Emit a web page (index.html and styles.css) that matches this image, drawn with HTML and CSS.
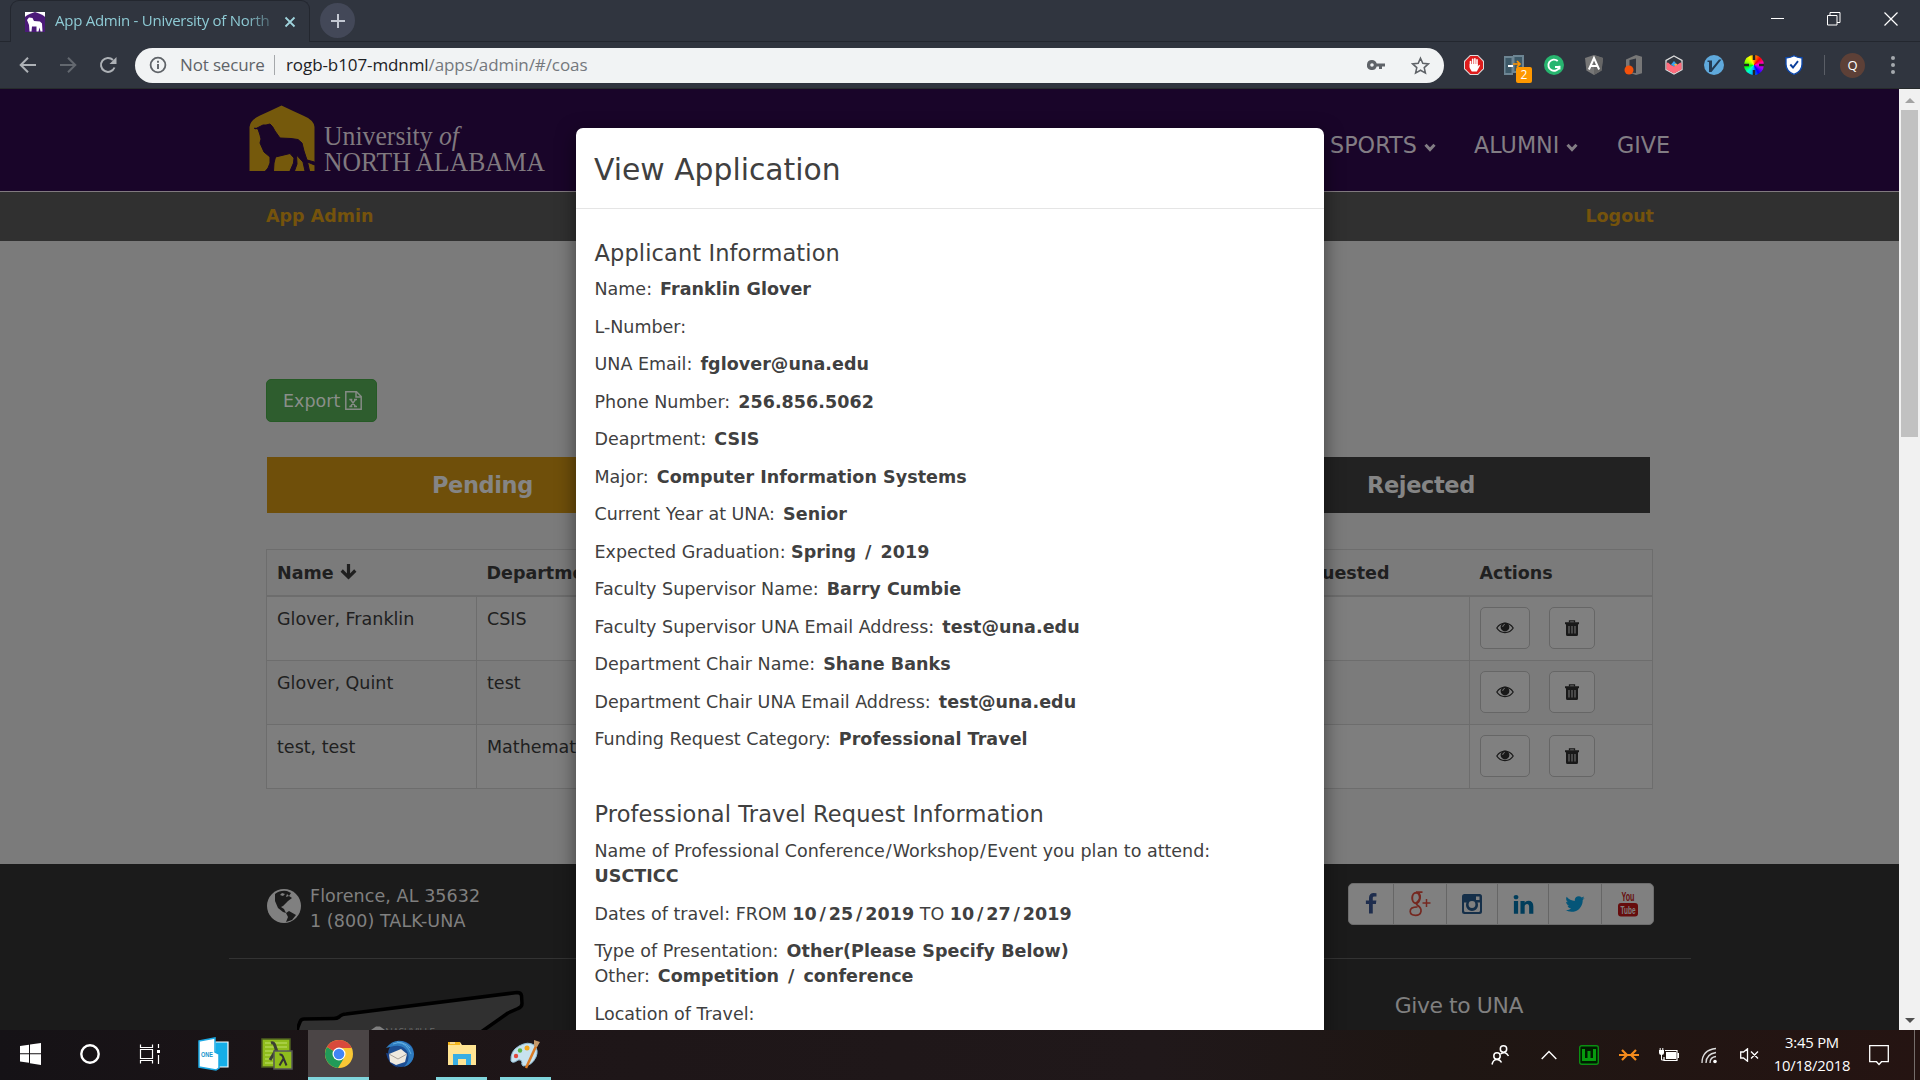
FILE: index.html
```html
<!DOCTYPE html>
<html lang="en">
<head>
<meta charset="utf-8">
<title>App Admin - University of North Alabama</title>
<link rel="stylesheet" href="styles.css">
</head>
<body>
<svg class="defs" aria-hidden="true">
  <symbol id="i-eye" viewBox="0 0 18 14"><path d="M.8 7C4.500 .9 13.500 .9 17.200 7 13.500 13.100 4.500 13.100 .8 7z" fill="none" stroke="currentColor" stroke-width="1.200"/><circle cx="9" cy="6" r="4.400" fill="currentColor"/><path d="M6.700 5.800Q6.900 3.800 8.700 3.500" fill="none" stroke="#808080" stroke-width="1"/></symbol>
  <symbol id="i-trash" viewBox="0 0 14 16"><path d="M4.500 2.500V.8h5v1.700" fill="none" stroke="currentColor" stroke-width="1.300"/><path d="M0 2.300h14v2H0zM1 4h12v10.500q0 1.500-1.500 1.500h-9Q1 16 1 14.500z" fill="currentColor"/><path d="M4 6v7.500M7 6v7.500M10 6v7.500" stroke="#707070" stroke-width="1.100"/></symbol>
  <symbol id="i-caret" viewBox="0 0 12 9"><path d="M1.500 1.800 6 6.500l4.500-4.700" fill="none" stroke="currentColor" stroke-width="3"/></symbol>
</svg>

<div class="tabstrip">
  <div class="tab">
    <svg class="favicon" width="20" height="20" viewBox="0 0 20 20"><path d="M0 0h20v20H0z" fill="#fff"/><path d="M0 20V5Q1 3 10 0q9 3 10 5v15z" fill="#4b1a78"/><path d="M2 8 4 5.500l3.500.5L9 9l6 .5 2 2 .5 8h-2l-1-4-1 4h-2v-5H7l-.5 5H4.500L4 13z" fill="#fff"/></svg>
    <span class="tab-title">App Admin - University of North</span>
    <svg width="12" height="12" viewBox="0 0 12 12"><path d="M1.500 1.500l9 9m0-9-9 9" stroke="#9fd3dc" stroke-width="1.800"/></svg>
  </div>
  <div class="newtab"><svg width="16" height="16" viewBox="0 0 16 16"><path d="M8 1v14M1 8h14" stroke="#c3c8d2" stroke-width="2"/></svg></div>
  <div class="wincontrols">
    <svg width="14" height="14" viewBox="0 0 14 14"><path d="M1 6.500h13" stroke="#fff"/></svg>
    <svg width="14" height="14" viewBox="0 0 14 14"><path d="M.5 3.500h9.500v9.500H.5zM3 3.500v-3h10v10h-3" fill="none" stroke="#fff"/></svg>
    <svg width="14" height="14" viewBox="0 0 14 14"><path d="M.5.5l13 13m0-13-13 13" stroke="#fff" stroke-width="1.200"/></svg>
  </div>
</div>

<div class="toolbar">
  <div class="nav-icons">
    <svg width="18" height="18" viewBox="0 0 18 18"><path d="M17 9H2m7-7.300L1.700 9 9 16.300" fill="none" stroke="#adb1b6" stroke-width="2"/></svg>
    <svg width="18" height="18" viewBox="0 0 18 18"><path d="M1 9h15M9 1.700 16.300 9 9 16.300" fill="none" stroke="#63686f" stroke-width="2"/></svg>
    <svg width="18" height="18" viewBox="0 0 18 18"><path d="M15.500 11.500A7 7 0 1 1 14 4" fill="none" stroke="#adb1b6" stroke-width="2"/><path d="M17.500 1v7h-7z" fill="#adb1b6"/></svg>
  </div>
  <div class="omnibox">
    <svg width="18" height="18" viewBox="0 0 18 18"><circle cx="9" cy="9" r="7.400" fill="none" stroke="#5f6368" stroke-width="1.800"/><path d="M9 8v5M9 4.800v1.900" stroke="#5f6368" stroke-width="1.900"/></svg>
    <span class="secure">Not secure</span>
    <span class="sep"></span>
    <span class="url"><b>rogb-b107-mdnml</b>/apps/admin/#/coas</span>
    <svg class="key" width="18" height="12" viewBox="0 0 18 12"><path d="M5 1a5 5 0 1 0 4.700 6.500H12V10h3V7.500h3v-3H9.700A5 5 0 0 0 5 1zm0 3.200a1.800 1.800 0 1 1 0 3.600 1.800 1.800 0 0 1 0-3.600z" fill="#5f6368"/></svg>
    <svg width="19" height="19" viewBox="0 0 20 20"><path d="m10 2.300 2.400 5.400 5.900.6-4.400 3.900 1.300 5.800-5.200-3-5.200 3 1.300-5.800-4.400-3.900 5.900-.6z" fill="none" stroke="#5f6368" stroke-width="1.600"/></svg>
  </div>
  <div class="extensions">
    <svg width="20" height="20" viewBox="0 0 20 20"><path d="M6 0h8l6 6v8l-6 6H6l-6-6V6z" fill="#ddd"/><path d="M6.400 1h7.200L19 6.400v7.200L13.600 19H6.400L1 13.600V6.400z" fill="#dd1c1c"/><path d="M6.500 12V6.500M8.700 10V4.200M10.900 10V3.700M13 10V4.900" stroke="#fff" stroke-width="1.600" stroke-linecap="round"/><path d="M5.700 9h8.100v2.500l1.300-1.800q1.200 0 .7 1.200L12.800 16.500H7.800L5.700 13z" fill="#fff"/></svg>
    <span class="badged"><svg width="20" height="20" viewBox="0 0 20 20"><path d="M0 1h9v19H0zM9 0h11v18H9z" fill="#6d8593"/><path d="M1.500 3h6v15h-6zM10.500 2H18v14h-7.500z" fill="#3d5968"/><path d="M4 11h5" stroke="#fff" stroke-width="2"/><path d="M9 9h6m-2-3 3 3-3 3" stroke="#ff9500" stroke-width="1.700" fill="none"/></svg><span class="count">2</span></span>
    <svg width="20" height="20" viewBox="0 0 20 20"><circle cx="10" cy="10" r="10" fill="#27b56f"/><path d="M13.700 6A5.600 5.600 0 1 0 15.300 12H11m4.500-1.200v3.700" fill="none" stroke="#fff" stroke-width="1.900"/></svg>
    <svg width="20" height="20" viewBox="0 0 20 20"><path d="M10 0l9 3-1.400 12.500L10 20l-7.600-4.500L1 3z" fill="#777"/><path d="M10 0l9 3-1.400 12.500L10 20z" fill="#666"/><path d="M4.900 14.500 10 3l5.100 11.500M7 11h6" fill="none" stroke="#fff" stroke-width="2"/></svg>
    <svg width="20" height="20" viewBox="0 0 20 20"><path d="M2 4.500 12 0l6 1.700v16.500L12 20l-8-2.700 8 .8V3.500L5.500 5v8L2 14.500z" fill="#777"/><circle cx="5" cy="15" r="4.500" fill="#f4510b"/></svg>
    <svg width="20" height="20" viewBox="0 0 20 20"><path d="m10 1 8 4.500v9L10 19l-8-4.500v-9z" fill="#31363f" stroke="#ddd" stroke-width="1.300"/><path d="m7 9.500 3-3.500 3.500 4L10 12z" fill="#36a2eb"/><path d="M2.500 8 4 7.500 7 10l3 1.500 3.500-2 3-2 1 .5v6.500L10 18.500l-7.500-4z" fill="#ff6b7c"/><path d="m10 9.500 2-1 1.500 1-2 1.500z" fill="#ffb13d"/></svg>
    <svg width="20" height="20" viewBox="0 0 20 20"><circle cx="10" cy="10" r="10" fill="#5fa9dc"/><path d="M3.500 5.500H8v7.500l7-8.500h2.500L7.500 17H5V7H3.500z" fill="#243b53"/></svg>
    <span class="wheel"><svg width="20" height="20" viewBox="0 0 20 20"><path d="M10 0v5M10 15v5M0 10h5M15 10h5" stroke="#222" stroke-width="2.500"/></svg></span>
    <svg width="20" height="20" viewBox="0 0 20 20"><path d="M10 .7q4 2.300 8 2v6.500q0 7-8 10.200Q2 16.200 2 9.200V2.700q4 .3 8-2z" fill="#fff" stroke="#0b48ae" stroke-width="1.300"/><path d="m6.300 9.500 2.700 3 5-6.300" fill="none" stroke="#0b3f9c" stroke-width="1.900"/></svg>
  </div>
  <span class="tb-sep"></span>
  <span class="avatar">Q</span>
  <svg class="dots" width="6" height="20" viewBox="0 0 6 20"><g fill="#a5a9ae"><circle cx="3" cy="3" r="2"/><circle cx="3" cy="10" r="2"/><circle cx="3" cy="17" r="2"/></g></svg>
</div>

<div class="view">
  <div class="page">
    <header class="site-header">
      <svg class="logo" width="300" height="70" viewBox="0 0 300 70">
        <path d="M1.500 66V22Q2 15 12 10.500 22 6 33.500 .5 45 6 55 10.500 66 15 66.500 22V66z" fill="#75590c"/>
        <path d="M6.500 23 10 24 12 30 13 34 12 38 16 47 22 52 22 58 20 63 17.500 66H25.500L26 58 27.500 52 42 48.500 46 53 45.500 58 42 66H46.500L49 59 48.500 50 55 57 57 66H61.500L59.500 57 66.500 60V57L59 55 56 46 54 38 50 34.500 43 33.500 32 33 27 26 24.500 21.500 22 19 18 20 15 20 11 22 7 24z" fill="#190529" stroke="#190529"/>
        <text x="76" y="40" font-family="Liberation Serif, serif" font-size="28" textLength="135" lengthAdjust="spacingAndGlyphs" fill="#80797f">University <tspan font-style="italic">of</tspan></text>
        <text x="76" y="65.500" font-family="Liberation Serif, serif" font-size="28" textLength="221" lengthAdjust="spacingAndGlyphs" fill="#80797f">NORTH ALABAMA</text>
      </svg>
      <nav class="menu">
        <span class="m1">SPORTS <svg width="12" height="9"><use href="#i-caret"/></svg></span>
        <span class="m2">ALUMNI <svg width="12" height="9"><use href="#i-caret"/></svg></span>
        <span class="m3">GIVE</span>
      </nav>
    </header>
    <div class="subnav"><span>App Admin</span><span>Logout</span></div>
    <main class="content">
      <button class="export"><span>Export</span> <svg width="17" height="19" viewBox="0 0 17 19"><path d="M.8.8h10.700l4.700 4.700v12.700H.8zM11 1v5h5" fill="none" stroke="#858b85" stroke-width="1.500"/><path d="m5.500 8.500 5 7m0-7-5 7M4.300 8.500h3M9 8.500h3M4.300 15.500h3M9 15.500h3" fill="none" stroke="#858b85" stroke-width="1.300"/></svg></button>
      <div class="status-tabs"><div class="pending">Pending</div><div class="approved"></div><div class="rejected">Rejected</div></div>
      <table class="apps">
        <colgroup><col class="c1"><col class="c2"><col class="c3"><col class="c4"></colgroup>
        <thead><tr><th>Name <svg width="17" height="16" viewBox="0 0 17 16"><path d="M8.500 0v13M1.700 6.500l6.800 6.800 6.800-6.800" fill="none" stroke="#1f1f1f" stroke-width="3.200"/></svg></th><th>Department</th><th class="right">Requested</th><th>Actions</th></tr></thead>
        <tbody>
          <tr><td>Glover, Franklin</td><td>CSIS</td><td></td><td><div class="acts"><button class="act eye"><svg width="18" height="14"><use href="#i-eye"/></svg></button><button class="act"><svg width="14" height="16"><use href="#i-trash"/></svg></button></div></td></tr>
          <tr><td>Glover, Quint</td><td>test</td><td></td><td><div class="acts"><button class="act eye"><svg width="18" height="14"><use href="#i-eye"/></svg></button><button class="act"><svg width="14" height="16"><use href="#i-trash"/></svg></button></div></td></tr>
          <tr><td>test, test</td><td>Mathemat</td><td></td><td><div class="acts"><button class="act eye"><svg width="18" height="14"><use href="#i-eye"/></svg></button><button class="act"><svg width="14" height="16"><use href="#i-trash"/></svg></button></div></td></tr>
        </tbody>
      </table>
    </main>
    <footer class="footer">
      <div class="foot-top">
        <svg class="globe" width="34" height="34" viewBox="0 0 34 34"><circle cx="17" cy="17" r="17" fill="#808080"/><path d="M8 5q5-4 12-3l4 2-2 3 3 2-4 3-5 5-2 1 3 2 2 4-3-1-5-4-3-7zM22 22l7 4-4 5-6 2 2-5-2-4z" fill="#1b1b1b"/><path d="m13 6 3 1 2-2-3-1zM19 8l3-1-2-2z" fill="#808080"/></svg>
        <div class="addr">Florence, AL 35632<br>1 (800) TALK-UNA</div>
        <div class="social">
          <span class="s1"><svg width="22" height="22" viewBox="0 0 1792 1792"><path fill="#1e2d4d" d="M1343 12v264h-157q-86 0-116 36t-30 108v189h293l-39 296h-254v759h-306v-759h-255v-296h255v-218q0-186 104-288.500t277-102.500q147 0 228 12z"/></svg></span>
          <span class="s2"><svg width="22" height="26" viewBox="0 0 22 26"><g fill="none" stroke="#752820"><ellipse cx="7" cy="7" rx="3.800" ry="5.300" stroke-width="2"/><path d="M7 1.200h6.500M9.500 1.500q2.500 3 1.300 6-.8 2-3 3.800-1.300 1.200.7 3 4 2.700 3.500 6-.7 4-5.500 4-5 0-5.300-3.800Q1 16 8.500 15.800" stroke-width="1.700"/><path d="M17.500 8v8M13.500 12h8" stroke-width="1.500"/></g></svg></span>
          <span class="s3"><svg width="20" height="20" viewBox="0 0 20 20"><rect width="20" height="20" rx="2.500" fill="#152f49"/><path d="M2 8.500h2.500a6 6 0 1 0 11 0H18v8q0 1.500-1.500 1.500h-13Q2 18 2 16.500zM14 2.500h3.500v3.500H14z" fill="#808080"/><circle cx="10" cy="10.500" r="5" fill="#152f49"/><circle cx="10" cy="10.500" r="3.400" fill="#808080"/></svg></span>
          <span class="s4"><svg width="23" height="23" viewBox="0 0 1792 1792"><path fill="#003d5b" d="M477 625v991h-330v-991h330zm21-306q1 73-50.500 122t-135.500 49h-2q-82 0-132-49t-50-122q0-74 51.500-122.500t134.500-48.500 133 48.500 51 122.500zm1166 729v568h-329v-530q0-105-40.500-164.500t-126.500-59.500q-63 0-105.500 34.500t-63.500 85.500q-11 30-11 81v553h-329q2-399 2-647t-1-296l-1-48h329v144h-2q20-32 41-56t56.500-52 87-43.500 114.500-15.500q171 0 275 113.500t104 332.500z"/></svg></span>
          <span class="s5"><svg width="22" height="22" viewBox="0 0 1792 1792"><path fill="#055578" d="M1684 408q-67 98-162 167 1 14 1 42 0 130-38 259.500t-115.500 248.500-184.500 210.500-258 146-323 54.500q-271 0-496-145 35 4 78 4 225 0 401-138-105-2-188-64.500t-114-159.500q33 5 61 5 43 0 85-11-112-23-185.500-111.500t-73.500-205.500v-4q68 38 146 41-66-44-105-115t-39-154q0-88 44-163 121 149 294.500 238.500t371.500 99.500q-8-38-8-74 0-134 94.500-228.500t228.500-94.500q140 0 236 102 109-21 205-78-37 115-142 178 93-10 186-50z"/></svg></span>
          <span class="s6"><svg width="20" height="28" viewBox="0 0 20 28"><text x="3.500" y="11" font-family="Liberation Sans, sans-serif" font-size="12" font-weight="700" textLength="13" lengthAdjust="spacingAndGlyphs" fill="#660c0c">You</text><rect y="13" width="20" height="13.500" rx="3" fill="#660c0c"/><text x="2.500" y="24" font-family="Liberation Sans, sans-serif" font-size="11" font-weight="700" textLength="15" lengthAdjust="spacingAndGlyphs" fill="#808080">Tube</text></svg></span>
        </div>
      </div>
      <div class="foot-bottom">
        <svg class="map" width="240" height="50" viewBox="0 0 240 50"><path d="M-2 60 1 47 3 42q1-3 4-3l30-.5q3 0 5-1.500 3-3 7-3L220 12.500q4 0 4.500 3l.5 8q0 3.500-4 5l-10 4.500-27 19z" fill="#303030" stroke="#000" stroke-width="3.500" stroke-linejoin="round"/><path d="m74 50 5-3.500h4l5 3.500z" fill="#808080"/><text x="88" y="56" font-family="Open Sans, sans-serif" font-size="10.500" textLength="50" fill="#666">NASHVILLE</text></svg>
        <span class="give">Give to UNA</span>
      </div>
    </footer>
  </div>
  <div class="scrollbar"><span class="up"></span><span class="thumb"></span><span class="down"></span></div>

  <section class="modal">
    <h3>View Application</h3>
    <div class="modal-body">
      <h4>Applicant Information</h4>
      <p>Name: <b>Franklin Glover</b></p>
      <p>L-Number:</p>
      <p>UNA Email: <b>fglover@una.edu</b></p>
      <p>Phone Number: <b>256.856.5062</b></p>
      <p>Deaprtment: <b>CSIS</b></p>
      <p>Major: <b>Computer Information Systems</b></p>
      <p>Current Year at UNA: <b>Senior</b></p>
      <p>Expected Graduation: <b class="tight">Spring <i>/</i> 2019</b></p>
      <p>Faculty Supervisor Name: <b>Barry Cumbie</b></p>
      <p>Faculty Supervisor UNA Email Address: <b>test@una.edu</b></p>
      <p>Department Chair Name: <b>Shane Banks</b></p>
      <p>Department Chair UNA Email Address: <b>test@una.edu</b></p>
      <p>Funding Request Category: <b>Professional Travel</b></p>
      <h4 class="second">Professional Travel Request Information</h4>
      <p>Name of Professional Conference<i>/</i>Workshop<i>/</i>Event you plan to attend:<br><b class="tight">USCTICC</b></p>
      <p>Dates of travel: FROM <b class="tight">10<i>/</i>25<i>/</i>2019</b> TO <b class="tight">10<i>/</i>27<i>/</i>2019</b></p>
      <p>Type of Presentation: <b>Other(Please Specify Below)</b><br>Other: <b>Competition <i>/</i> conference</b></p>
      <p>Location of Travel:</p>
    </div>
  </section>
</div>

<div class="taskbar">
  <div class="apps-row">
    <span><svg width="21" height="24" viewBox="0 0 21 24"><path d="M0 4l9-1.300v8.500H0zM10 2.500 21 1v10.200H10zM0 12.200h9v8.500L0 19.500zM10 12.200h11V23l-11-1.800z" fill="#fff"/></svg></span>
    <span><svg width="22" height="22" viewBox="0 0 22 22"><circle cx="11" cy="11" r="8.700" fill="none" stroke="#fff" stroke-width="2.400"/></svg></span>
    <span><svg width="22" height="20" viewBox="0 0 22 20"><path d="M1.500 5.500h12v9h-12zM1.500.5v3h12v-3M1.500 19.500v-3h12v3M19.500 0v4M19.500 11v9" fill="none" stroke="#fff" stroke-width="1.200"/><path d="M18 6h3v3h-3z" fill="#fff"/></svg></span>
    <span class="w68"><svg width="32" height="34" viewBox="0 0 32 34"><path d="M17 5h13v25H17z" fill="#16aee8" stroke="#fff" stroke-width="1.200"/><path d="M1 4 17 1v14l4 2v14l-3 2-17-3z" fill="#fff" stroke="#1ba9e4" stroke-width="1.500"/><text x="3" y="20" font-family="Liberation Sans, sans-serif" font-size="7.500" font-weight="700" textLength="12" lengthAdjust="spacingAndGlyphs" fill="#1594cc">ONE</text></svg></span>
    <span class="lam"><svg width="32" height="34" viewBox="0 0 32 34"><path d="M1 2h28v28H1z" fill="#8fbc1c" stroke="#4f6021" stroke-width="1.500"/><path d="M4 6h22M4 10h22M4 14h22M4 18h8M4 22h8M4 26h8" stroke="#bfe06a"/><path d="M10 6q3-1 4 3l5 14M15 13 9 23" fill="none" stroke="#3b4033" stroke-width="3"/><path d="M13 14h18v18H13z" fill="#8fbc1c" stroke="#555" stroke-width="1.500"/><path d="M18.500 17.500q2.500-.5 3.500 2.500l3.500 8.500M22.500 21.500l-4 7" fill="none" stroke="#333" stroke-width="2"/></svg></span>
    <span class="active"><svg width="28" height="28" viewBox="0 0 28 28"><circle cx="14" cy="14" r="14" fill="#f9c735"/><path d="M14 14 1.900 7A14 14 0 0 0 13 28l6-10z" fill="#219a58"/><path d="M14 14 1.900 7a14 14 0 0 1 24.700 1H14z" fill="#d94a3c"/><circle cx="14" cy="14" r="6.500" fill="#fff"/><circle cx="14" cy="14" r="5.300" fill="#4285f4"/></svg></span>
    <span class="w61"><svg width="30" height="30" viewBox="0 0 30 30"><circle cx="16" cy="15" r="13" fill="#1d4f94"/><path d="M1 9Q8 0 17 2q11 3 12 13-1 10-10 13 6-6 4-14-4-9-14-7z" fill="#2f7cc0"/><path d="M8 5q10-4 17 4M12 3q10 1 14 12" fill="none" stroke="#62aee0"/><path d="M1 14q2 12 13 15-7-4-8-14z" fill="#173f87"/><path d="m4 15 12-5 6 5-2 8-9 3-6-3z" fill="#eee9df"/><path d="m4 15 9 5 9-5" fill="none" stroke="#a9a29a"/></svg></span>
    <span class="open w64"><svg width="28" height="26" viewBox="0 0 28 26"><path d="M0 1h12l2 3h14v20H0z" fill="#ffe493"/><path d="M0 1h12v3H0z" fill="#f3b61f"/><path d="M2 1.500h5v1H2z" fill="#fff"/><path d="M5 24V13h18v11h-5v-6h-8v6z" fill="#38aee4"/></svg></span>
    <span class="open w61"><svg width="30" height="30" viewBox="0 0 30 30"><path d="M1 22Q0 12 9 7q9-5 15-1 5 5 2 12-4 9-13 9-2-2-1-4-1-3-4-2-5 4-7 1z" fill="#c7e2ef" stroke="#8fbdd3"/><circle cx="6" cy="17" r="2.200" fill="#e2493e"/><circle cx="10" cy="11.500" r="2.200" fill="#5bb548"/><circle cx="17" cy="9" r="2.500" fill="#f2a71b"/><path d="M16 29 27 5" stroke="#d97b25" stroke-width="2.500"/><path d="m24 7 0-6 6 2-3 5z" fill="#c59a6b"/></svg></span>
  </div>
  <div class="tray">
    <span class="people"><svg width="19" height="20" viewBox="0 0 19 20"><g fill="none" stroke="#fff" stroke-width="1.500"><circle cx="12.500" cy="4" r="3.200"/><circle cx="6" cy="11" r="3.200"/><path d="M1 19.500q1-5 5-5 3 0 4.500 3M9.500 9q5-3.500 8 2"/></g></svg></span>
    <span><svg width="16" height="10" viewBox="0 0 16 10"><path d="m.7 9 7.300-7.500L15.300 9" fill="none" stroke="#fff" stroke-width="1.400"/></svg></span>
    <span><svg width="20" height="20" viewBox="0 0 20 20"><rect x=".7" y=".7" width="18.600" height="18.600" rx="2" fill="#001d00" stroke="#0b8f12" stroke-width="1.400"/><path d="M4.500 4v10.500h11V4M10 6v8" fill="none" stroke="#079b0e" stroke-width="3"/></svg></span>
    <span><svg width="20" height="14" viewBox="0 0 20 14"><path d="M0 7h20M3 2l5 5-5 5M17 2l-5 5 5 5" fill="none" stroke="#f58b1c" stroke-width="2.200"/></svg></span>
    <span><svg width="20" height="14" viewBox="0 0 20 14"><path d="M6 2.500h12v10H5V9" fill="none" stroke="#fff" stroke-width="1.200"/><path d="M7 4h10v7H7zM18.500 5H20v5h-1.500zM0 2h5v3q0 2-2.500 2T0 5z" fill="#fff"/><path d="M1.200 0v2M3.800 0v2M2.500 6v6h3" stroke="#fff" fill="none"/></svg></span>
    <span><svg width="17" height="17" viewBox="0 0 17 17"><g fill="none" stroke="#ddd" stroke-width="1.300"><path d="M1 16Q1 3 15 1.500M5 16Q5 7 15 5.500M9 16q0-6 6-6.500"/></g><circle cx="14" cy="14.500" r="1.800" fill="#fff"/></svg></span>
    <span><svg width="19" height="14" viewBox="0 0 19 14"><path d="M.7 4h2.800L7.500.8v12.400L3.500 10H.7zM11 3.500l7 7m0-7-7 7" fill="none" stroke="#fff" stroke-width="1.300"/></svg></span>
    <div class="clock">3:45 PM<br>10/18/2018</div>
    <svg width="20" height="21" viewBox="0 0 20 21"><path d="M.7.7h18.600v16H12.500L10 19.500 7.500 16.700H.7z" fill="none" stroke="#fff" stroke-width="1.300"/></svg>
    <div class="desk"></div>
  </div>
</div>
</body>
</html>
```
FILE: styles.css
```css
* { box-sizing: border-box; }
body { margin: 0; width: 1920px; height: 1080px; overflow: hidden; display: flex; flex-direction: column; font: 17.5px/25px "DejaVu Sans", Verdana, sans-serif; background: #30353f; }
svg { display: block; flex: none; }
.defs { position: absolute; width: 0; height: 0; }
button { font: inherit; }

/* browser tabs */
.tabstrip { height: 42px; flex: none; display: flex; align-items: center; background: #30353f; border-bottom: 1px solid #23272f; padding-left: 10px; font-family: "Open Sans", sans-serif; }
.tab { width: 300px; height: 42px; margin-bottom: -1px; background: #30353f; border: 1px solid #23272f; border-bottom: 0; border-radius: 9px 9px 0 0; display: flex; align-items: center; padding: 0 13px 0 14px; }
.tab-title { width: 217px; margin: 0 13px 0 10px; padding-bottom: 2px; white-space: nowrap; overflow: hidden; font-size: 15px; letter-spacing: -.26px; color: #8ecbd5; -webkit-mask-image: linear-gradient(90deg, #000 88%, rgba(0,0,0,.3)); mask-image: linear-gradient(90deg, #000 88%, rgba(0,0,0,.3)); }
.newtab { width: 35px; height: 35px; margin-left: 10px; border-radius: 50%; background: #434858; display: flex; align-items: center; justify-content: center; }
.wincontrols { margin-left: auto; margin-right: 22px; margin-bottom: 4px; display: flex; gap: 43px; }

/* browser toolbar */
.toolbar { height: 47px; flex: none; display: flex; align-items: center; background: #30353f; font-family: "Open Sans", sans-serif; border-bottom: 1px solid #262b2c; }
.nav-icons { display: flex; gap: 22px; margin-left: 19px; }
.omnibox { width: 1309px; height: 35px; margin-left: 18px; border-radius: 18px; background: #f1f3f4; display: flex; align-items: center; padding: 0 14px; font-size: 17px; }
.secure { width: 83px; margin-left: 13px; padding-bottom: 2px; color: #5f6368; white-space: nowrap; letter-spacing: -.15px; }
.sep { width: 1px; height: 20px; margin: 0 11px; background: #a5a8ab; }
.url { color: #74787d; letter-spacing: -.09px; padding-bottom: 2px; }
.url b { font-weight: 400; color: #202124; }
.key { margin-left: auto; margin-right: 26px; }
.extensions { display: flex; gap: 20px; margin-left: 20px; }
.badged { position: relative; }
.count { position: absolute; left: 12px; top: 12px; width: 16px; height: 16px; border-radius: 2px; background: #ff9800; color: #fff; font-size: 12px; line-height: 16px; text-align: center; }
.wheel { width: 20px; height: 20px; border-radius: 50%; background: conic-gradient(#9f0, #ff0, #f80, #f00, #f0c, #90f, #00f, #0af, #0fc, #0f0, #9f0); transform: rotate(-65deg); }
.wheel svg { transform: rotate(65deg); }
.tb-sep { width: 1px; height: 20px; margin: 0 15px 0 20px; background: #5a5e66; }
.avatar { width: 25px; height: 25px; border-radius: 50%; background: #5d4037; color: #fff; font-size: 13px; line-height: 24px; text-align: center; }
.dots { margin-left: 25px; }

/* page */
.view { position: relative; height: 941px; flex: none; display: flex; overflow: hidden; }
.page { width: 1899px; height: 941px; background: #7b7b7b; }
.site-header { height: 103px; background: #190529; border-bottom: 1px solid #80797f; display: flex; padding: 16px 0 0 248px; }
.menu { margin-left: 782px; padding-top: 28px; display: flex; color: #827d84; font-size: 22.300px; }
.menu span { display: flex; align-items: center; gap: 7px; height: 25px; white-space: nowrap; }
.menu svg { margin-top: 4px; }
.m1 { width: 144px; } .m2 { width: 143px; }
.subnav { height: 49px; background: #303030; display: flex; justify-content: space-between; padding: 12px 245px 0 266px; color: #75530c; font-weight: 700; }
.content { height: 623px; padding: 138px 0 0 266px; }
.export { display: flex; align-items: center; gap: 5px; width: 111px; height: 43px; padding: 0 0 0 16px; border: 1px solid #265a26; border-radius: 5px; background: #2e5d2e; color: #8a8f8a; }
.export span { padding-top: 2px; }
.status-tabs { display: flex; height: 56px; width: 1383px; margin: 35px 0 36px 1px; font-size: 22.500px; font-weight: 700; color: #858585; text-align: center; line-height: 56px; letter-spacing: -.4px; }
.pending { width: 431px; background: #6f4f0a; }
.approved { width: 491px; background: #222; }
.rejected { width: 461px; padding-left: 3px; background: #222; }
.apps { width: 1387px; border-collapse: collapse; table-layout: fixed; color: #202020; border: 1px solid #6d6d6d; }
.c1 { width: 210px; } .c2 { width: 300px; } .c4 { width: 183px; }
.apps th { text-align: left; height: 46px; padding: 2px 10px 0; border-bottom: 2px solid #6d6d6d; white-space: nowrap; }
.apps th svg { display: inline-block; vertical-align: -1px; }
.apps th.right { text-align: right; padding-right: 80px; }
.apps td { height: 64px; padding: 10px; vertical-align: top; border: 1px solid #6d6d6d; }
.apps tbody tr:first-child td { height: 65px; }
.apps tbody tr:nth-child(odd) { background: #7e7e7e; }
.acts { display: flex; gap: 19px; }
.act { width: 46px; height: 42px; padding: 0; border: 1px solid #666; border-radius: 5px; background: #808080; color: #191919; display: flex; align-items: center; justify-content: center; }
.act.eye { width: 50px; }

.footer { height: 166px; background: #1b1b1b; color: #808080; }
.foot-top { height: 95px; margin: 0 208px 0 229px; border-bottom: 1px solid #333; display: flex; padding: 19px 37px 0 38px; }
.globe { margin-top: 6px; }
.addr { margin: 1px 0 0 9px; height: 50px; white-space: nowrap; letter-spacing: .08px; }
.social { margin-left: auto; display: flex; width: 306px; height: 42px; border-radius: 5px; overflow: hidden; background: #808080; border: 1px solid #6c6c6c; }
.social span { display: flex; align-items: center; justify-content: center; border-right: 1px solid #666; }
.s1 { width: 45px; } .s2, .s5 { width: 53px; } .s3, .s4 { width: 51px; }
.social .s6 { width: 51px; border: 0; }
.foot-bottom { height: 71px; display: flex; justify-content: space-between; padding: 21px 376px 0 297px; }
.give { font-size: 21.900px; letter-spacing: -.4px; margin-top: 13px; }

.scrollbar { width: 21px; height: 941px; background: #f1f1f1; display: flex; flex-direction: column; align-items: center; padding: 9px 0 7px; }
.up { border: 5px solid transparent; border-top: 0; border-bottom-color: #a3a3a3; }
.thumb { width: 17px; height: 327px; margin-top: 7px; background: #c1c1c1; }
.down { margin-top: auto; border: 5px solid transparent; border-bottom: 0; border-top-color: #505050; }

/* dialog over the page */
.modal { position: absolute; left: 576px; top: 39px; width: 748px; height: 930px; background: #fff; border-radius: 7px 7px 0 0; box-shadow: 0 6px 19px rgba(0,0,0,.5); color: #404040; }
.modal h3 { margin: 0; height: 81px; padding: 24px 18px 0; font-weight: 400; font-size: 29.800px; line-height: 36px; border-bottom: 1px solid #e5e5e5; }
.modal-body { padding: 32px 18.500px 0; }
.modal h4 { margin: 0 0 11px; font-weight: 400; font-size: 22.500px; line-height: 25px; letter-spacing: .11px; }
.modal h4.second { margin: 50px 0 12px; }
.modal p { margin: 0 0 12.500px; white-space: nowrap; }
.modal b { margin-left: 2.500px; letter-spacing: .05px; }
.modal .tight { margin-left: 0; }
/* wide slashes */
.modal i { font-style: normal; padding: 0 1px; }
.modal b i { padding: 0 2.800px; }

/* taskbar */
.taskbar { height: 50px; flex: none; display: flex; justify-content: space-between; background: linear-gradient(90deg, #151216, #1d1517 20%, #20181a 60%, #1e1613 75%, #251412); font-family: "Open Sans", sans-serif; color: #fff; }
.apps-row { display: flex; }
.apps-row span { width: 60px; height: 50px; display: flex; align-items: center; justify-content: center; border-bottom: 3px solid transparent; }
.apps-row .w61 { width: 61px; }
.apps-row .w64 { width: 64px; }
.apps-row .w68 { width: 68px; }
.apps-row .lam { padding-right: 2px; }
.apps-row .active { width: 61px; background: #4b4546; border-color: #80d5dc; }
.apps-row .open { border: 0; padding-bottom: 3px; background: linear-gradient(#80d5dc, #80d5dc) 6px 100% / 51px 3px no-repeat; }
.tray { display: flex; align-items: center; }
.tray span { width: 40px; display: flex; justify-content: center; }
.tray .people { margin-right: 9px; }
.clock { width: 90px; text-align: center; font-size: 14.800px; line-height: 23px; letter-spacing: -.2px; margin: 0 12px 2px -2px; }
.desk { width: 1px; height: 50px; margin: 0 5px 0 25px; background: #756d6b; }
```
